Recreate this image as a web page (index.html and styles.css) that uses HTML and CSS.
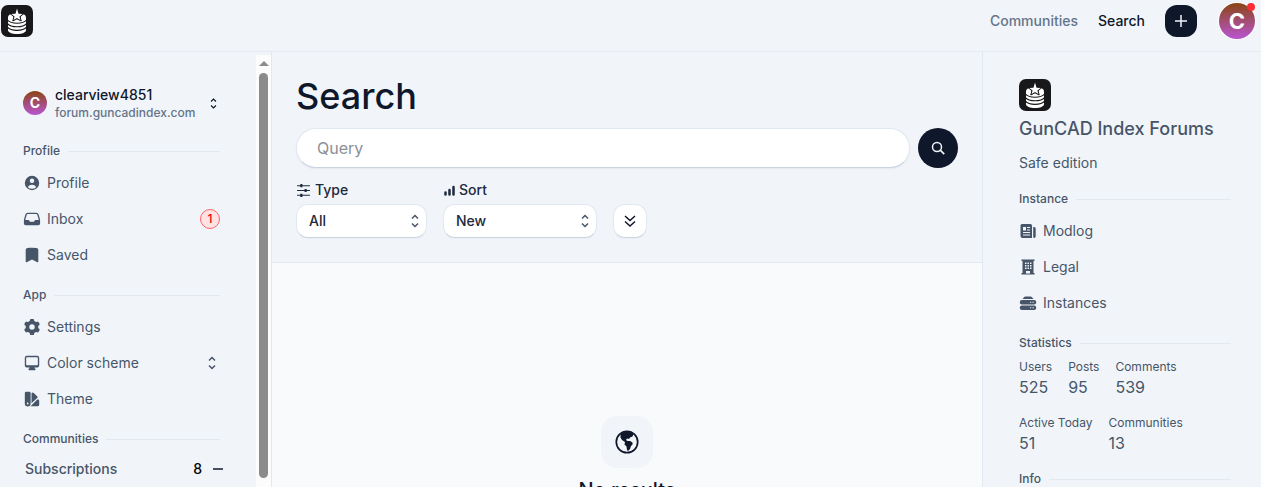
FILE: index.html
```html
<!DOCTYPE html>
<html lang="en">
<head>
  <meta charset="UTF-8" />
  <meta name="viewport" content="width=device-width, initial-scale=1.0"/>
  <title>Search</title>
  <link rel="stylesheet" href="styles.css">
</head>
<body>

  <!-- shared shapes -->
  <svg class="defs" aria-hidden="true">
    <symbol id="logo" viewBox="0 0 32 32">
      <rect width="32" height="32" rx="7" fill="#18181a"/>
      <path d="M7 12.500c0-3 4-4.500 9-4.500s9 1.500 9 4.500v12.500c0 2.500-4 4-9 4s-9-1.500-9-4z" fill="#fff"/>
      <path d="M6.500 15c2 2.500 5 3.200 9.500 3.200s7.500-.7 9.500-3.200M6.500 18.600c2 2.500 5 3.200 9.500 3.200s7.500-.7 9.500-3.200M6.500 22.200c2 2.500 5 3.200 9.500 3.200s7.500-.7 9.500-3.200" fill="none" stroke="#18181a" stroke-width="1.100"/>
      <path d="M16 3.800l1.900 4.500 4.900.3-3.700 3.200 1.100 4.200-4.200-2.200-4.200 2.200 1.100-4.200-3.700-3.200 4.900-.3z" fill="#18181a" stroke="#18181a"/>
      <path d="M16 3.500l1.500 5.200 4.100.3-3.200 2.600 1 3.400-3.400-2-3.400 2 1-3.400-3.200-2.600 4.100-.3z" fill="#fff"/>
    </symbol>
    <symbol id="updown" viewBox="0 0 16 16">
      <path d="M5 5.500l3-3 3 3M5 10.500l3 3 3-3" fill="none" stroke="currentColor" stroke-width="1.500"/>
    </symbol>
  </svg>

  <header class="navbar">
    <a href="#" aria-label="Home"><svg class="logo"><use href="#logo"/></svg></a>
    <nav class="nav-links">
      <a href="#" class="muted">Communities</a>
      <a href="#">Search</a>
      <button class="create" aria-label="Create">
        <svg class="icon-sm" viewBox="0 0 16 16"><path d="M8 2v12M2 8h12" stroke="currentColor" stroke-width="1.500"/></svg>
      </button>
      <button class="avatar avatar-lg" aria-label="Account">C<span class="dot"></span></button>
    </nav>
  </header>

  <div class="layout">
    <aside class="left">
      <div class="menu">
        <button class="account">
          <span class="avatar">C</span>
          <span class="names">
            <span class="username">clearview4851</span>
            <span class="instance">forum.guncadindex.com</span>
          </span>
          <svg class="arrows"><use href="#updown"/></svg>
        </button>

        <h2 class="label">Profile</h2>
        <a href="#" class="item">
          <svg class="icon" viewBox="0 0 20 20"><path fill-rule="evenodd" d="M18 10a8 8 0 1 1-16 0 8 8 0 0 1 16 0Zm-5.500-2.500a2.500 2.500 0 1 1-5 0 2.500 2.500 0 0 1 5 0ZM10 12a5.990 5.990 0 0 0-4.793 2.390A6.483 6.483 0 0 0 10 16.500a6.483 6.483 0 0 0 4.793-2.110A5.990 5.990 0 0 0 10 12Z"/></svg>
          Profile
        </a>
        <a href="#" class="item">
          <svg class="icon" viewBox="0 0 20 20"><path fill-rule="evenodd" d="M1 11.270c0-.246.033-.492.099-.730l1.523-5.521A2.750 2.750 0 0 1 5.273 3h9.454a2.750 2.750 0 0 1 2.651 2.019l1.523 5.520c.066.239.099.485.099.732V15a2 2 0 0 1-2 2H3a2 2 0 0 1-2-2v-3.730Zm3.068-5.852A1.250 1.250 0 0 1 5.273 4.500h9.454a1.250 1.250 0 0 1 1.205.918l1.523 5.520c.006.020.010.041.015.062H14a1 1 0 0 0-.860.490l-.606 1.020a1 1 0 0 1-.860.490H8.236a1 1 0 0 1-.894-.553l-.448-.894A1 1 0 0 0 6 11H2.530l.015-.062 1.523-5.520Z"/></svg>
          Inbox
          <span class="badge">1</span>
        </a>
        <a href="#" class="item">
          <svg class="icon" viewBox="0 0 20 20"><path d="M10 2c-1.716 0-3.408.106-5.070.310C3.806 2.450 3 3.414 3 4.517V17.250a.750.750 0 0 0 1.075.676L10 15.082l5.925 2.844A.750.750 0 0 0 17 17.250V4.517c0-1.103-.806-2.068-1.930-2.207A41.403 41.403 0 0 0 10 2Z"/></svg>
          Saved
        </a>

        <h2 class="label">App</h2>
        <a href="#" class="item">
          <svg class="icon" viewBox="0 0 20 20"><path fill-rule="evenodd" d="M7.840 1.804A1 1 0 0 1 8.820 1h2.360a1 1 0 0 1 .980.804l.331 1.652a6.993 6.993 0 0 1 1.929 1.115l1.598-.540a1 1 0 0 1 1.186.447l1.180 2.044a1 1 0 0 1-.205 1.251l-1.267 1.113a7.047 7.047 0 0 1 0 2.228l1.267 1.113a1 1 0 0 1 .206 1.250l-1.180 2.045a1 1 0 0 1-1.187.447l-1.598-.540a6.993 6.993 0 0 1-1.929 1.115l-.330 1.652a1 1 0 0 1-.980.804H8.820a1 1 0 0 1-.980-.804l-.331-1.652a6.993 6.993 0 0 1-1.929-1.115l-1.598.540a1 1 0 0 1-1.186-.447l-1.180-2.044a1 1 0 0 1 .205-1.251l1.267-1.114a7.050 7.050 0 0 1 0-2.227L1.821 7.773a1 1 0 0 1-.206-1.250l1.180-2.045a1 1 0 0 1 1.187-.447l1.598.540A6.992 6.992 0 0 1 7.510 3.456l.330-1.652ZM10 13a3 3 0 1 0 0-6 3 3 0 0 0 0 6Z"/></svg>
          Settings
        </a>
        <button class="item">
          <svg class="icon" viewBox="0 0 20 20"><path fill-rule="evenodd" d="M2 4.250A2.250 2.250 0 0 1 4.250 2h11.500A2.250 2.250 0 0 1 18 4.250v8.500A2.250 2.250 0 0 1 15.750 15h-3.105a3.501 3.501 0 0 0 1.100 1.677A.750.750 0 0 1 13.260 18H6.740a.750.750 0 0 1-.484-1.323A3.501 3.501 0 0 0 7.355 15H4.250A2.250 2.250 0 0 1 2 12.750v-8.500Zm1.500 0a.750.750 0 0 1 .750-.750h11.500a.750.750 0 0 1 .750.750v7.500a.750.750 0 0 1-.750.750H4.250a.750.750 0 0 1-.750-.750v-7.500Z"/></svg>
          Color scheme
          <svg class="arrows push"><use href="#updown"/></svg>
        </button>
        <a href="#" class="item">
          <svg class="icon" viewBox="0 0 20 20"><path fill-rule="evenodd" d="M3.500 2A1.500 1.500 0 0 0 2 3.500V15a3 3 0 1 0 6.500 0V3.500A1.500 1.500 0 0 0 7 2h-3.500Zm12.500 6.500L9.500 14.743V3.200l.8-.2a1.500 1.500 0 0 1 1.600.3l4.100 3.800a1 1 0 0 1 0 1.400ZM8.364 18H16.500a1.500 1.500 0 0 0 1.500-1.500v-4.500a1.500 1.500 0 0 0-1.500-1.500h-.6l-7.536 7.500ZM5.200 16a1 1 0 1 0 0-2 1 1 0 0 0 0 2Z"/></svg>
          Theme
        </a>

        <h2 class="label">Communities</h2>
        <button class="subs">
          Subscriptions
          <span class="count">8</span>
          <svg class="minus" viewBox="0 0 12 12"><path d="M1 6h10" stroke="currentColor" stroke-width="1.500"/></svg>
        </button>
      </div>
      <div class="scrollbar">
        <span class="scroll-up"></span>
        <span class="thumb"></span>
      </div>
    </aside>

    <main>
      <form class="search-panel">
        <h1>Search</h1>
        <div class="query-row">
          <input type="text" class="query" placeholder="Query" aria-label="Query">
          <button type="button" class="go" aria-label="Search">
            <svg class="icon-sm" viewBox="0 0 16 16"><circle cx="7" cy="7" r="4.500" fill="none" stroke="currentColor" stroke-width="1.500"/><path d="M10.200 10.200l4 4" stroke="currentColor" stroke-width="1.700"/></svg>
          </button>
        </div>
        <div class="filters">
          <div class="field">
            <label for="type">
              <svg class="label-icon" viewBox="0 0 14 14"><path d="M1 2.500h12M1 7h12M1 11.500h12" stroke="currentColor"/><path d="M4 2.500h2M8 7h2M4 11.500h2" stroke="currentColor" stroke-width="3"/></svg>
              Type
            </label>
            <span class="select">
              <select id="type" class="type"><option>All</option></select>
              <svg class="arrows"><use href="#updown"/></svg>
            </span>
          </div>
          <div class="field">
            <label for="sort">
              <svg class="bars-icon" viewBox="0 0 12 14"><path d="M2.500 9.500v2M6.500 7v4.500M10.500 4v7.500" stroke="currentColor" stroke-width="2.500" stroke-linecap="round"/></svg>
              Sort
            </label>
            <span class="select">
              <select id="sort" class="sort"><option>New</option></select>
              <svg class="arrows"><use href="#updown"/></svg>
            </span>
          </div>
          <button type="button" class="more" aria-label="More filters">
            <svg class="icon-sm" viewBox="0 0 16 16"><path d="M3 3l5 4.500L13 3M3 8.500L8 13l5-4.500" fill="none" stroke="currentColor" stroke-width="1.500"/></svg>
          </button>
        </div>
      </form>

      <section class="empty">
        <div class="globe">
          <svg viewBox="0 0 24 24"><circle cx="12" cy="12" r="10.700" fill="none" stroke="currentColor" stroke-width="1.700"/><path d="M5.500 4C9 1 15 1 18.500 4l-1 2.500-2.500 1-1 1.500-2-.5-1 1.500 1.500 1h2.500l2.500 1.500v2l-1.500 1.500-1 3-2 2-1-1-.5-3.500-2-2 .5-2.500-3-2-1.500-2.500z" fill="currentColor"/></svg>
        </div>
        <h2>No results</h2>
      </section>
    </main>

    <aside class="right">
      <svg class="logo"><use href="#logo"/></svg>
      <h2 class="site-name">GunCAD Index Forums</h2>
      <p class="tagline">Safe edition</p>

      <h2 class="label">Instance</h2>
      <a href="#" class="item">
        <svg class="icon" viewBox="-1 -1 18 18"><path fill-rule="evenodd" d="M.5 2.500A1.500 1.500 0 0 1 2 1h8.500A1.500 1.500 0 0 1 12 2.500V15H2.500a2 2 0 0 1-2-2zM3 4v3.500h3V4zm4 0v1h3V4zm0 2.500v1h3v-1zM3 9v1h7V9zm0 2.500v1h7v-1z"/><path d="M13.200 4h1a1.500 1.500 0 0 1 1.500 1.500v8a1.500 1.500 0 0 1-2.500 1z"/></svg>
        Modlog
      </a>
      <a href="#" class="item">
        <svg class="icon" viewBox="-1 -1 18 18"><path fill-rule="evenodd" d="M1.500 .5h13V2h-1v12h1v1.500h-13V14h1V2h-1zM5 3.500V5h1.500V3.500zm2.500 0V5H9V3.500zm2.500 0V5h1.500V3.500zM5 6v1.500h1.500V6zm2.500 0v1.500H9V6zM10 6v1.500h1.500V6zM5 8.500V10h1.500V8.500zm2.500 0V10H9V8.500zm2.500 0V10h1.500V8.500zM6 12v2.500h4V12z"/></svg>
        Legal
      </a>
      <a href="#" class="item">
        <svg class="icon" viewBox="-1 -1 18 18"><path fill-rule="evenodd" d="M2.500 4L4 2.200A2 2 0 0 1 5.500 1.500h5a2 2 0 0 1 1.500.7L13.500 4zM2 5h12a2 2 0 0 1 0 4.500H2A2 2 0 0 1 2 5zm8 1.700v1h1.200v-1zm2.500 0v1h1.200v-1zM2 10.500h12a2 2 0 0 1 0 4.500H2a2 2 0 0 1 0-4.500zm8 1.700v1h1.200v-1zm2.500 0v1h1.200v-1z"/></svg>
        Instances
      </a>

      <h2 class="label">Statistics</h2>
      <dl class="stats">
        <div><dt>Users</dt><dd>525</dd></div>
        <div><dt>Posts</dt><dd>95</dd></div>
        <div><dt>Comments</dt><dd>539</dd></div>
        <div><dt>Active Today</dt><dd>51</dd></div>
        <div><dt>Communities</dt><dd>13</dd></div>
      </dl>

      <h2 class="label">Info</h2>
    </aside>
  </div>

</body>
</html>
```

FILE: styles.css
```css
* {
  box-sizing: border-box;
}

body {
  margin: 0;
  height: 100vh;
  display: flex;
  flex-direction: column;
  overflow: hidden;
  font-family: Inter, "Liberation Sans", sans-serif;
  font-size: 14px;
  line-height: 20px;
  color: #0f172a;
  background: #f1f5f9;
}

h1, h2, p, dl, dd {
  margin: 0;
}

a {
  color: inherit;
  text-decoration: none;
}

button, input, select {
  font: inherit;
  color: inherit;
  border: none;
  background: none;
  padding: 0;
}

button {
  display: flex;
  align-items: center;
  justify-content: center;
}

svg {
  display: block;
  flex-shrink: 0;
}

.defs {
  position: absolute;
  width: 0;
  height: 0;
}

.icon {
  width: 18px;
  height: 18px;
  fill: currentColor;
}

.icon-sm, .arrows {
  width: 16px;
  height: 16px;
}

.logo {
  width: 32px;
  height: 32px;
}

/* top bar */
.navbar {
  display: flex;
  align-items: center;
  justify-content: space-between;
  padding: 0 6px 10px 1px;
  height: 52px;
  flex-shrink: 0;
  border-bottom: 1px solid #e6ebf1;
}

.nav-links {
  display: flex;
  align-items: center;
  gap: 20px;
  font-weight: 500;
}

.muted {
  color: #64748b;
}

.create {
  width: 32px;
  height: 32px;
  margin-right: 2px;
  border-radius: 12px;
  background: #0f172a;
  color: #f1f5f9;
}

.avatar {
  display: flex;
  align-items: center;
  justify-content: center;
  width: 24px;
  height: 24px;
  flex-shrink: 0;
  border-radius: 50%;
  background: linear-gradient(#8b4513, #ba55d3);
  color: #fff;
  font-size: 14px;
  font-weight: 700;
}

.avatar-lg {
  position: relative;
  width: 36px;
  height: 36px;
  font-size: 22px;
  box-shadow: 0 0 0 1px #fff;
}

.dot {
  position: absolute;
  top: 0;
  right: 0;
  width: 8px;
  height: 8px;
  border-radius: 50%;
  background: #fb2c36;
}

.layout {
  flex: 1;
  min-height: 0;
  display: grid;
  grid-template-columns: 272px 1fr 279px;
  grid-template-rows: minmax(0, 1fr);
}

/* sidebars */
.left {
  display: flex;
  min-height: 0;
  border-right: 1px solid #e2e8f0;
  color: #475569;
}

.menu {
  flex: 1;
  padding: 33px 36px 0 23px;
}

.account {
  width: 100%;
  gap: 8px;
  margin-bottom: 18px;
  text-align: left;
  color: #0f172a;
}

.names {
  flex: 1;
  display: flex;
  flex-direction: column;
}

.username {
  font-weight: 500;
  line-height: 20px;
}

.instance {
  font-size: 12px;
  line-height: 16px;
  font-weight: 500;
  color: #64748b;
}

.account .arrows {
  width: 13px;
  height: 13px;
}

.label {
  display: flex;
  align-items: center;
  gap: 8px;
  font-size: 12px;
  line-height: 24px;
  font-weight: 500;
  color: #475569;
}

.label::after {
  content: "";
  flex: 1;
  height: 1px;
  background: #e2e8f0;
}

.item {
  display: flex;
  align-items: center;
  justify-content: flex-start;
  gap: 6px;
  width: 100%;
  height: 36px;
}

.item + .label {
  margin-top: 10px;
}

.label + .item {
  margin-top: 2px;
}

.push {
  margin-left: auto;
}

.badge {
  margin-left: auto;
  width: 20px;
  height: 20px;
  border: 1px solid #ff6467;
  border-radius: 50%;
  background: #ffe2e2;
  color: #e7000b;
  font-size: 12px;
  line-height: 18px;
  font-weight: 500;
  text-align: center;
}

.subs {
  width: calc(100% + 4px);
  height: 36px;
  padding-left: 2px;
  gap: 10px;
  font-weight: 500;
}

.count {
  margin-left: auto;
  color: #000;
}

.minus {
  width: 12px;
  height: 12px;
  color: #0f172a;
}

.scrollbar {
  display: flex;
  flex-direction: column;
  align-items: center;
  width: 15px;
  margin-top: 3px;
  padding: 6px 0 9px;
  gap: 7px;
  background: #fcfcfc;
}

.scroll-up {
  border: 5px solid transparent;
  border-top: none;
  border-bottom-color: #8b8b8b;
}

.thumb {
  flex: 1;
  width: 9px;
  border-radius: 5px;
  background: #8b8b8b;
}

/* search */
main {
  display: flex;
  flex-direction: column;
  min-height: 0;
  background: #f8fafc;
}

.search-panel {
  padding: 24px;
  background: #f1f5f9;
  border-bottom: 1px solid #e2e8f0;
}

h1 {
  font-size: 36px;
  line-height: 40px;
  font-weight: 500;
}

.query-row {
  display: flex;
  gap: 8px;
  margin: 12px 0;
}

.query {
  flex: 1;
  height: 40px;
  padding: 0 20px;
  border: 1px solid #e2e8f0;
  border-bottom-color: #cad5e2;
  border-radius: 20px;
  background: #fff;
  font-size: 16px;
  box-shadow: 0 1px 2px rgba(0, 0, 0, 0.05);
}

.query::placeholder {
  color: #8b8f98;
}

.go {
  width: 40px;
  height: 40px;
  border-radius: 50%;
  background: #0f172a;
  color: #f1f5f9;
}

.filters {
  display: flex;
  align-items: flex-end;
  gap: 16px;
}

.field {
  display: flex;
  flex-direction: column;
  gap: 4px;
  font-weight: 500;
  color: #1d293d;
}

.field label {
  display: flex;
  align-items: center;
  gap: 4px;
}

.label-icon {
  width: 15px;
  height: 15px;
}

.bars-icon {
  width: 12px;
  height: 14px;
}

.select {
  display: grid;
  align-items: center;
}

.select select, .select .arrows {
  grid-area: 1 / 1;
}

.select .arrows {
  justify-self: end;
  margin-right: 4px;
  color: #475569;
  pointer-events: none;
}

select {
  appearance: none;
  height: 34px;
  padding: 0 12px;
}

select, .more {
  border: 1px solid #e2e8f0;
  border-bottom-color: #cad5e2;
  border-radius: 12px;
  background: #fff;
  box-shadow: 0 1px 1px rgba(0, 0, 0, 0.03);
}

.type {
  width: 131px;
}

.sort {
  width: 154px;
}

.more {
  width: 34px;
  height: 34px;
}

.empty {
  flex: 1;
  display: flex;
  flex-direction: column;
  align-items: center;
  gap: 8px;
  padding-top: 153px;
}

.globe {
  padding: 14px;
  border-radius: 16px;
  background: #f1f5f9;
}

.globe svg {
  width: 24px;
  height: 24px;
}

.empty h2 {
  font-size: 20px;
  line-height: 28px;
  font-weight: 500;
}

.right {
  padding: 27px 30px 0 36px;
  border-left: 1px solid #e2e8f0;
  color: #475569;
}

.site-name {
  margin: 4px 0 10px;
  font-size: 18px;
  line-height: 28px;
  font-weight: 500;
}

.tagline {
  margin-bottom: 14px;
}

.stats {
  display: flex;
  flex-wrap: wrap;
  gap: 16px;
  margin: 4px 0 12px;
}

.stats dt {
  font-size: 12px;
  line-height: 16px;
}

.stats dd {
  font-size: 16px;
  line-height: 24px;
}
```
